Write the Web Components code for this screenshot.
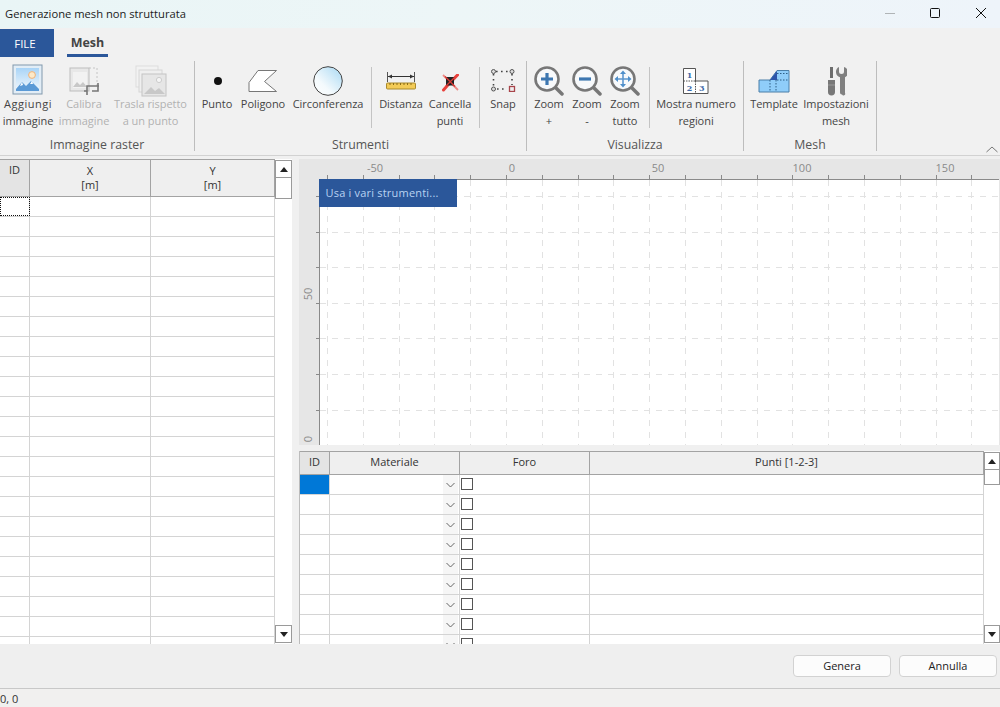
<!DOCTYPE html>
<html lang="it">
<head>
<meta charset="utf-8">
<title>Generazione mesh non strutturata</title>
<style>
html,body{margin:0;padding:0;width:1000px;height:707px;overflow:hidden;background:#f0f0f0;}
body{font-family:"Open Sans","Noto Sans",sans-serif;color:#222;}
</style>
</head>
<body>
<title-bar>Generazione mesh non strutturata</title-bar>
<ribbon-tabs></ribbon-tabs>
<ribbon-bar>
  <ribbon-group label="Immagine raster" style="--gw:194px">
    <ribbon-button w="56" icon="add-image"><span style="letter-spacing:.5px">Aggiungi</span><br>immagine</ribbon-button>
    <ribbon-button w="56" icon="calibrate" disabled>Calibra<br>immagine</ribbon-button>
    <ribbon-button w="77" icon="translate" disabled>Trasla rispetto<br>a un punto</ribbon-button>
  </ribbon-group>
  <ribbon-group label="Strumenti" style="--gw:331px">
    <ribbon-button w="44" icon="point">Punto</ribbon-button>
    <ribbon-button w="48" icon="polygon">Poligono</ribbon-button>
    <ribbon-button w="82" icon="circle">Circonferenza</ribbon-button>
    <ribbon-sep style="--l:2px;--r:2px"></ribbon-sep>
    <ribbon-button w="54" icon="distance">Distanza</ribbon-button>
    <ribbon-button w="44" icon="delete">Cancella<br>punti</ribbon-button>
    <ribbon-sep style="--l:7px;--r:1px"></ribbon-sep>
    <ribbon-button w="44" icon="snap">Snap</ribbon-button>
  </ribbon-group>
  <ribbon-group label="Visualizza" style="--gw:216px">
    <ribbon-button w="38" icon="zoom-in" style="margin-left:3px">Zoom<br>+</ribbon-button>
    <ribbon-button w="38" icon="zoom-out">Zoom<br>-</ribbon-button>
    <ribbon-button w="38" icon="zoom-all">Zoom<br>tutto</ribbon-button>
    <ribbon-sep style="--l:5px;--r:1px"></ribbon-sep>
    <ribbon-button w="90" icon="regions">Mostra numero<br>regioni</ribbon-button>
  </ribbon-group>
  <ribbon-group label="Mesh" style="--gw:132px">
    <ribbon-button w="54" icon="template" style="margin-left:3px">Template</ribbon-button>
    <ribbon-button w="70" icon="settings">Impostazioni<br>mesh</ribbon-button>
  </ribbon-group>
</ribbon-bar>
<main-area>
  <left-pane slot="left">
    <data-grid cols="30,121,124" rows="24" head="38" headers="ID|X<br>[m]|Y<br>[m]" variant="points"></data-grid>
    <grid-scrollbar w="17" thumb="21"></grid-scrollbar>
  </left-pane>
  <right-pane slot="right">
    <mesh-canvas></mesh-canvas>
    <lower-pane>
      <data-grid cols="30,130,130,394" rows="9" head="24" headers="ID|Materiale|Foro|Punti [1-2-3]" variant="regions"></data-grid>
      <grid-scrollbar w="16" thumb="15"></grid-scrollbar>
    </lower-pane>
  </right-pane>
</main-area>
<dialog-footer>
  <push-button>Genera</push-button>
  <push-button>Annulla</push-button>
</dialog-footer>
<status-bar>0, 0</status-bar>

<script>
function def(name, css, html, init){
  customElements.define(name, class extends HTMLElement{
    constructor(){super();this.attachShadow({mode:'open'});}
    connectedCallback(){
      const h = typeof html==='function'?html(this):html;
      this.shadowRoot.innerHTML='<style>'+css+'</style>'+h;
      if(init)init(this);
    }
  });
}

def('title-bar',`
:host{display:flex;align-items:center;height:28px;padding:0 0 2px 5px;box-sizing:border-box;font-size:11.2px;color:#1b1b1b;
background:linear-gradient(90deg,#e9f5f6,#edf6f7 45%,#eef4fa);position:relative}
.b{position:absolute;top:8px;width:10px;height:10px}
`,`<slot></slot>
<svg class="b" style="left:885px" viewBox="0 0 10 10"><path d="M0 5.5H10" stroke="#b0b4b6" stroke-width="1"/></svg>
<svg class="b" style="left:930px" viewBox="0 0 10 10"><rect x=".5" y=".5" width="9" height="9" rx="1" fill="none" stroke="#111"/></svg>
<svg class="b" style="left:976px" viewBox="0 0 10 10"><path d="M0 0L10 10M10 0L0 10" stroke="#111" stroke-width="1" fill="none"/></svg>`);

def('ribbon-tabs',`
:host{display:flex;height:29px;box-sizing:border-box;padding-top:1px;background:#f1f1f1;font-size:12px}
.file{width:54px;height:28px;background:#2b579a;color:#fff;display:flex;align-items:center;justify-content:center;box-sizing:border-box;font-size:11.500px;padding-right:4px}
.mesh{margin-left:13px;width:41px;height:28px;box-sizing:border-box;border-bottom:3px solid #2b579a;text-align:center;font-weight:700;color:#444;line-height:27px;font-size:12.500px}
`,`<div class="file">FILE</div><div class="mesh">Mesh</div>`);

def('ribbon-bar',`
:host{display:flex;height:99px;box-sizing:border-box;background:#f1f1f1;border-bottom:1px solid #d2d2d2;padding-top:4px;position:relative}
svg{position:absolute;left:986px;top:89px}
`,`<slot></slot><svg width="12" height="7" viewBox="0 0 12 7"><path d="M.5 6L6 1l5.5 5" fill="none" stroke="#777"/></svg>`);

def('ribbon-group',`
:host{display:block;width:var(--gw);height:90px;box-sizing:content-box;border-right:1px solid #bdbdbd;position:relative;flex:none}
.row{display:flex;height:74px}
.lab{position:absolute;left:0;right:0;top:76px;text-align:center;font-size:12.300px;line-height:16px;color:#555}
`,h=>`<div class="row"><slot></slot></div><div class="lab">${h.getAttribute('label')}</div>`);

def('ribbon-sep',`
:host{display:block;width:1px;height:61px;margin:6px var(--r) 0 var(--l);background:#c4c4c4;flex:none}
`,``);

const I={
'add-image':`<svg width="32" height="32" viewBox="0 0 32 32"><defs><linearGradient id="a" x1="0" y1="0" x2="0" y2="1"><stop offset="0" stop-color="#a9d4f7"/><stop offset="1" stop-color="#f2f8fd"/></linearGradient></defs><rect x="1" y="1" width="29" height="29" fill="#e2edf6" stroke="#8299ad"/><rect x="4" y="4" width="23" height="23" fill="url(#a)"/><circle cx="20" cy="11" r="3.400" fill="#fde9c8" stroke="#eeb27a"/><path d="M4 25l6-7 4 4 5-5 8 8v2H4z" fill="#5b9ad6"/><path d="M10 18l-2 4 3-1zM20 17l-2 3 3 0z" fill="#fff"/></svg>`,
'calibrate':`<svg width="32" height="30" viewBox="0 0 32 30"><rect x="2" y="2" width="19" height="23" fill="#e8e8e8" stroke="#bdbdbd"/><rect x="5" y="6" width="14" height="16" fill="#f2f2f2"/><path d="M5 21l4-5 3 3 3-3 4 5z" fill="#c8c8c8"/><path d="M21 2h8v18" fill="none" stroke="#c4c4c4" stroke-dasharray="2 2"/><path d="M19 29v-9h12M19 25h-3M24 25h6v-8" fill="none" stroke="#777" stroke-width="1.600"/></svg>`,
'translate':`<svg width="34" height="32" viewBox="0 0 34 32"><rect x="2" y="1" width="22" height="21" fill="#f2f2f2" stroke="#ddd"/><rect x="5" y="5" width="23" height="22" fill="#efefef" stroke="#d6d6d6"/><rect x="8" y="9" width="24" height="22" fill="#e6e6e6" stroke="#c4c4c4"/><circle cx="25" cy="15" r="2.600" fill="#f5f5f5" stroke="#ccc"/><path d="M10 29l7-7 4 4 4-3 6 6z" fill="#c8c8c8"/></svg>`,
'point':`<svg width="32" height="32" viewBox="0 0 32 32"><circle cx="17" cy="16" r="4" fill="#111"/></svg>`,
'polygon':`<svg width="30" height="24" viewBox="0 0 30 24"><path d="M1 13.500L10 1.500H28.500L16.500 12.500 28.500 22.500H1z" fill="#fff" stroke="#777"/></svg>`,
'circle':`<svg width="32" height="32" viewBox="0 0 32 32"><defs><linearGradient id="c" x1="1" y1="0" x2="0" y2="1"><stop offset="0" stop-color="#a7d8f3"/><stop offset=".65" stop-color="#f4fafd"/><stop offset="1" stop-color="#fff"/></linearGradient></defs><circle cx="16" cy="16" r="14.300" fill="url(#c)" stroke="#444" stroke-width="1"/></svg>`,
'distance':`<svg width="30" height="18" viewBox="0 0 30 18"><path d="M1.500 0v10M28.500 0v10" stroke="#555"/><path d="M2 4.500H28" stroke="#333"/><path d="M2 4.500l4-2v4zM28 4.500l-4-2v4z" fill="#333"/><rect x=".5" y="11" width="29" height="6" rx="1" fill="#f3cb57" stroke="#a98a2e"/><path d="M4 11v2M7.500 11v2M11 11v2M14.500 11v2M18 11v2M21.500 11v2M25 11v2" stroke="#8b6c16"/></svg>`,
'delete':`<svg width="18" height="18" viewBox="0 0 18 18"><path d="M2 1L17 16" stroke="#ee8a86" stroke-width="1.800"/><path d="M16.500 1L6 12 2.500 16" stroke="#e8413c" stroke-width="3" fill="none" stroke-linecap="round"/><rect x="5" y="3" width="8" height="8.500" fill="#222"/><path d="M4 2.500L14 12.500M14 3L5 12" stroke="#d83a35" stroke-width="1.400"/></svg>`,
'snap':`<svg width="26" height="24" viewBox="0 0 26 24"><path d="M6 3.500h12M3.500 6v12M7 21h10M22 6v11" stroke="#444" stroke-width="1.600" stroke-dasharray="1.600 3.400" fill="none"/><circle cx="3.500" cy="3.500" r="2" fill="#ddd" stroke="#555"/><circle cx="22" cy="3.500" r="2" fill="#ddd" stroke="#555"/><circle cx="3.500" cy="21" r="2" fill="#ddd" stroke="#555"/><rect x="19.500" y="18.500" width="5" height="5" fill="#eee" stroke="#a8444a" stroke-width="1.300"/></svg>`,
'zoom-in':`<svg width="30" height="30" viewBox="0 0 30 30"><path d="M20 20l8 8" stroke="#777" stroke-width="3.500" stroke-linecap="round"/><circle cx="13" cy="13" r="11.500" fill="#f7f9fb" stroke="#777" stroke-width="2.600"/><path d="M7 13h12M13 7v12" stroke="#3d77b1" stroke-width="3.200"/></svg>`,
'zoom-out':`<svg width="30" height="30" viewBox="0 0 30 30"><path d="M20 20l8 8" stroke="#777" stroke-width="3.500" stroke-linecap="round"/><circle cx="13" cy="13" r="11.500" fill="#f7f9fb" stroke="#777" stroke-width="2.600"/><path d="M7 13h12" stroke="#3d77b1" stroke-width="3.200"/></svg>`,
'zoom-all':`<svg width="30" height="30" viewBox="0 0 30 30"><path d="M20 20l8 8" stroke="#777" stroke-width="3.500" stroke-linecap="round"/><circle cx="13" cy="13" r="11.500" fill="#f7f9fb" stroke="#777" stroke-width="2.600"/><path d="M6 13h14M13 6v14" stroke="#5c97cf" stroke-width="1.600"/><path d="M13 4.500l3 3.500h-6zM13 21.500l3-3.500h-6zM4.500 13l3.500-3v6zM21.500 13l-3.500-3v6z" fill="#4f8fca"/></svg>`,
'regions':`<svg width="26" height="28" viewBox="0 0 26 28"><path d="M.5 1.500h12v12.500h12.500v12.500H.5z" fill="#fff" stroke="#555"/><path d="M.5 14h12M12.500 14v12.500" stroke="#555" stroke-dasharray="1.500 1"/><g font-family="'DejaVu Serif','Liberation Serif',serif" font-size="8" font-weight="700" fill="#3c6aa8" text-anchor="middle"><text x="6.500" y="10.500">1</text><text x="6.500" y="23.500">2</text><text x="18.700" y="23.500">3</text></g></svg>`,
'template':`<svg width="32" height="24" viewBox="0 0 32 24"><path d="M1 11h11L19 1.500h12v21.500H1z" fill="#8fcdf9" stroke="#4b7fa8"/><path d="M12 11L19 2v9z" fill="#2e55a8"/><path d="M19 4.500h12M19 11h12" stroke="#2f5f86" stroke-dasharray="1.500 1.500"/><path d="M12 11v12M18 11v12" stroke="#2f5f86" stroke-dasharray="1.500 1.500"/></svg>`,
'settings':`<svg width="22" height="30" viewBox="0 0 22 30"><g transform="translate(2 0)"><path d="M3 1h3v11H3z" fill="#6d6d6d"/><path d="M1 14h7v12a3 3 0 0 1-7 0z" fill="#777"/><path d="M1 19h7" stroke="#9a9a9a"/></g><path transform="translate(1.500 0)" d="M12.500 1v4.500a2.500 2.500 0 0 0 5 0V1a5.500 5.500 0 0 1 1 10.200V27a1.500 1.500 0 0 1-3 1.500h-.2a2 2 0 0 1-1.800-2V11.200A5.500 5.500 0 0 1 12.500 1z" fill="#808080"/></svg>`
};
const PAD={'add-image':3,'calibrate':5,'translate':4,'point':4,'polygon':8,'circle':4,'distance':11,'delete':13,'snap':7,'zoom-in':5,'zoom-out':5,'zoom-all':5,'regions':6,'template':8,'settings':5};

def('ribbon-button',`
:host{display:flex;flex-direction:column;align-items:center;flex:none;font-size:11px;line-height:17px;color:#444;letter-spacing:-.05px}
:host([disabled]){color:#b2b2b2}
.ic{height:34px;width:100%;display:flex;justify-content:center;align-items:flex-start;box-sizing:border-box}
.t{text-align:center;white-space:nowrap}
`,h=>`<div class="ic" style="padding-top:${PAD[h.getAttribute('icon')]}px">${I[h.getAttribute('icon')]}</div><div class="t"><slot></slot></div>`,
h=>{h.style.width=h.getAttribute('w')+'px';});

def('main-area',`
:host{display:grid;grid-template-columns:292px 1fr;grid-template-rows:488px;height:488px;background:#f0f0f0}
::slotted(*){min-width:0}
`,`<slot name="left"></slot><slot name="right"></slot>`);

def('left-pane',`
:host{display:flex;box-sizing:border-box;padding-top:3px;height:488px;width:292px;overflow:hidden}
`,`<slot></slot>`);

def('right-pane',`
:host{display:flex;flex-direction:column;box-sizing:border-box;height:488px;padding:3px 0 0 7px;width:708px}
`,`<slot></slot>`);

def('lower-pane',`
:host{display:flex;margin-top:6px;height:193px;overflow:hidden;border-left:1px solid #bcbcbc;margin-left:0}
`,`<slot></slot>`);

def('data-grid',`
:host{display:block;overflow:hidden;background:#fff;height:100%;flex:none;font-size:11px;color:#444}
.r{display:grid}
.h{background:#efefef;box-sizing:border-box;border-top:1px solid #a3a3a3;border-bottom:1px solid #a3a3a3;margin-top:0}
.h div{border-right:1px solid #a3a3a3;text-align:center;line-height:14px;padding-top:var(--pt);box-sizing:border-box;color:#333}
.h div:first-child{background:#e4e4e4;padding-top:var(--pi)}
.b{height:20px;box-sizing:border-box;border-bottom:1px solid #d4d4d4}
.b>div{border-right:1px solid #d4d4d4;box-sizing:border-box;position:relative}
.sel{background:#0078d7}
.foc{outline:1px dotted #111;outline-offset:-1px}
.arr{position:absolute;right:1px;top:0;width:15px;height:19px;background:#f6f6f6;display:flex;align-items:center;justify-content:center}
.cb{position:absolute;left:1px;top:3px;border:1px solid #555;width:10px;height:10px;background:#fff}
`,h=>{
  const cols=h.getAttribute('cols').split(',').map(Number);
  const tpl=cols.map(c=>c+'px').join(' ');
  const rows=+h.getAttribute('rows');
  const head=+h.getAttribute('head');
  const heads=h.getAttribute('headers').split('|');
  const v=h.getAttribute('variant');
  h.style.width=cols.reduce((a,b)=>a+b,0)+'px';
  let s=`<div class="r h" style="grid-template-columns:${tpl};height:${head}px;--pt:${v==='points'?'4px':'3px'};--pi:3px">`+heads.map(t=>`<div>${t}</div>`).join('')+`</div>`;
  for(let i=0;i<rows;i++){
    s+=`<div class="r b" style="grid-template-columns:${tpl}">`+cols.map((c,j)=>{
      let cls='',inner='';
      if(v==='points'&&i===0&&j===0)cls='foc';
      if(v==='regions'&&i===0&&j===0)cls='sel';
      if(v==='regions'&&j===1)inner=`<span class="arr"><svg width="9" height="6" viewBox="0 0 9 6"><path d="M.5 1l4 4 4-4" fill="none" stroke="#666"/></svg></span>`;
      if(v==='regions'&&j===2)inner=`<span class="cb"></span>`;
      return `<div class="${cls}">${inner}</div>`;
    }).join('')+`</div>`;
  }
  return s;
});

def('grid-scrollbar',`
:host{display:flex;flex-direction:column;background:#fff;flex:none;position:relative;height:100%}
.btn{box-sizing:border-box;border:1px solid #9a9a9a;height:18px;display:flex;align-items:center;justify-content:center;background:#fff;flex:none}
.th{box-sizing:border-box;border:1px solid #9a9a9a;border-top:0;background:#fff;flex:none}
.sp{flex:1}
`,h=>`<div class="btn" style="margin-top:1px"><svg width="8" height="5" viewBox="0 0 8 5"><path d="M4 0l4 5H0z" fill="#222"/></svg></div><div class="th" style="height:${h.getAttribute('thumb')}px"></div><div class="sp"></div><div class="btn" style="margin-bottom:1px"><svg width="8" height="5" viewBox="0 0 8 5"><path d="M4 5l4-5H0z" fill="#222"/></svg></div>`,
h=>{h.style.width=h.getAttribute('w')+'px';});

def('mesh-canvas',`
:host{display:block;position:relative;height:286px;background:#e6e6e6;flex:none;overflow:hidden}
svg{display:block}
.tip{position:absolute;left:20px;top:20px;width:138px;height:28px;background:#2b579a;color:#b9d3f2;font-size:11px;line-height:28px;padding-left:6.500px;box-sizing:border-box;letter-spacing:.2px}
text{font-family:"Open Sans","Noto Sans",sans-serif;font-size:11px;fill:#8a8a8a}
`,()=>{
  let g='',t='';
  for(let k=-5;k<=13;k++){
    const x=Math.round(507+35.8*k)-300;
    if(x<21)continue;
    g+=`<path d="M${x+.5} 21V286" stroke="#e2e2e2" stroke-dasharray="6 6"/>`;
    t+=`<path d="M${x+.5} 16V20" stroke="#8a8a8a"/>`;
  }
  for(let k=0;k<8;k++){
    const y=Math.round(196+35.6*k)-159;
    g+=`<path d="M21 ${y+.5}H700" stroke="#e2e2e2" stroke-dasharray="6 6"/>`;
    t+=`<path d="M17 ${y+.5}H21" stroke="#8a8a8a"/>`;
  }
  const labs=[[76,'-50'],[213,'0'],[359,'50'],[503,'100'],[646,'150']].map(([x,s])=>`<text x="${x}" y="13" text-anchor="middle">${s}</text>`).join('');
  const vl=[[135,'50'],[280,'0']].map(([y,s])=>`<text transform="translate(13 ${y}) rotate(-90)" text-anchor="middle">${s}</text>`).join('');
  return `<svg width="700" height="286" viewBox="0 0 700 286"><rect x="21" y="21" width="679" height="265" fill="#fff"/>${g}${t}<path d="M20.500 286V20.500H700" fill="none" stroke="#8a8a8a"/>${labs}${vl}</svg><div class="tip">Usa i vari strumenti...</div>`;
});

def('dialog-footer',`
:host{display:flex;justify-content:flex-end;gap:8px;box-sizing:border-box;height:45px;padding:11px 3px 0 0;background:#efefef;border-bottom:1px solid #c8c8c8}
`,`<slot></slot>`);

def('push-button',`
:host{display:flex;align-items:center;justify-content:center;width:98px;height:22px;box-sizing:border-box;border:1px solid #d2d2d2;border-radius:4px;background:#fcfcfc;font-size:11px;color:#222;padding-bottom:2px}
`,`<slot></slot>`);

def('status-bar',`
:host{display:block;height:18px;background:#f1f0ef;font-size:11px;line-height:20px;color:#333;padding-left:0}
`,`<slot></slot>`);
</script>
</body>
</html>
